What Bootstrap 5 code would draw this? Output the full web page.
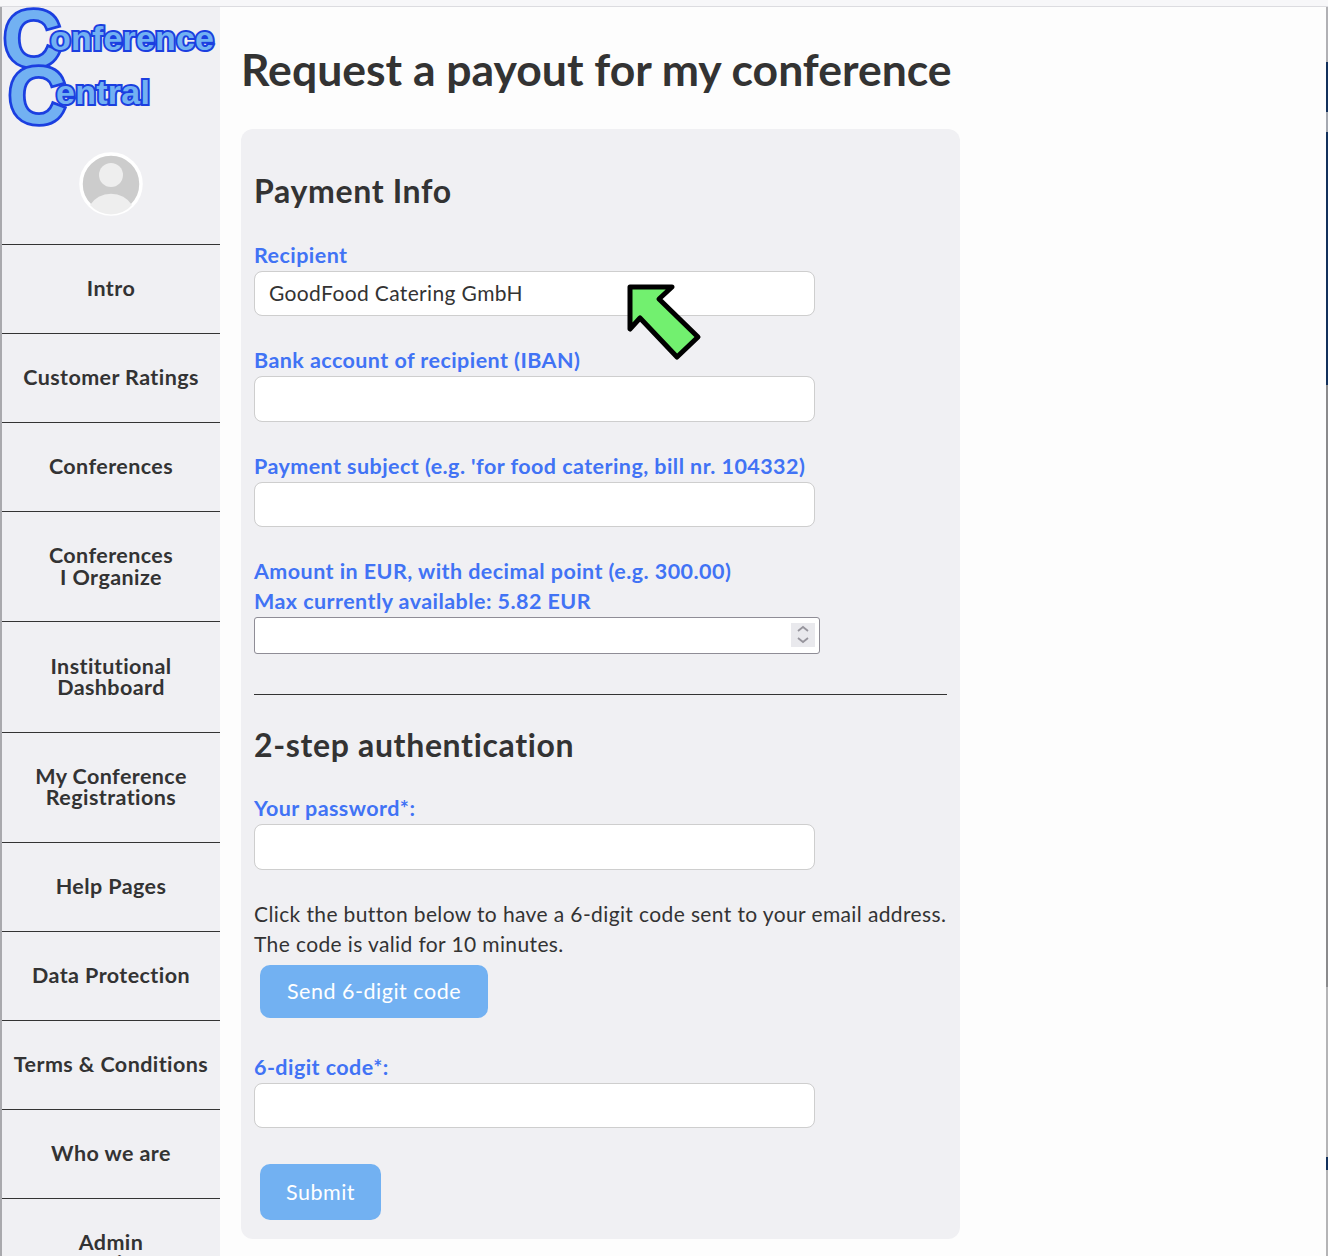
<!DOCTYPE html>
<html lang="en"><head><meta charset="utf-8"><title>Request a payout</title>
<link href="https://cdn.jsdelivr.net/npm/bootstrap@5.3.0/dist/css/bootstrap.min.css" rel="stylesheet">
<style>
html,body{height:1256px;overflow:hidden;background:#fdfdfd}
body{font-family:"Lato","Noto Sans",sans-serif;color:#333;font-size:21px}
.topstrip{height:7px;background:#f7f7f9;border-bottom:1px solid #dcdce0}
.pageframe{height:1249px;border-left:2px solid #a9a9ad;overflow:hidden}
.sidebar{width:218px;flex:none;background:#f0f0f3;height:1249px;overflow:hidden}
.logoarea{height:237px;position:relative}
.logosvg{display:block}
.logosvg text{paint-order:stroke}
.sideitem{display:block;border-top:1px solid #333;padding:33.375px 4px;line-height:21.25px;text-align:center;font-weight:700;font-size:21.5px;letter-spacing:.42px;color:#333;text-decoration:none;white-space:nowrap}
.mainpane{padding:0 0 0 21px;flex:1;min-width:0;position:relative}
.pagetitle{font-size:44.5px;font-weight:700;line-height:54px;margin:35px 0 33px 0;white-space:nowrap;color:#333}
.formpanel{width:719px;height:1110px;background:#f0f0f3;border-radius:12px;padding:0 13px}
.sectitle{font-size:32px;font-weight:700;line-height:40px;margin:0;padding-top:42px;height:111.75px;letter-spacing:.66px;color:#333}
.sectitle2{padding-top:0;height:auto;margin-top:30px;margin-bottom:29px}
.fieldlabel{display:block;color:#4173f5;font-weight:700;line-height:30px;margin:-1px 0 0;padding-bottom:1px;font-size:21.5px;letter-spacing:.44px;white-space:nowrap}
.fieldinput{width:561px;height:45.5px;border:1px solid #cecece;border-radius:8px;font-size:21px;letter-spacing:.36px;padding:0 14px 2px;margin-bottom:30px;color:#333}
.fieldinput:focus{border-color:#cecece;box-shadow:none}
.numinput{width:566px;height:36.5px;border:1px solid #8f8d96;border-radius:3px;margin-bottom:0;padding:0 6px}
.numinput::-webkit-inner-spin-button{display:none}
.numwrap{position:relative;width:566px}
.spinbox{position:absolute;right:5px;top:6px;width:24px;height:24px;background:#e9e9ed;display:block}
.divider{border:0;border-top:1px solid #333;opacity:1;margin:40.25px 0 0;width:693px}
.helptext{line-height:30px;margin:-1px 0 6px;white-space:nowrap;font-size:21px;letter-spacing:.38px}
.cfbtn{background:#72b1f2;border:0;border-radius:10px;color:#fff;font-size:21.5px;letter-spacing:.52px;margin-left:6px;padding:0 10px;display:block}
.cfbtn:hover{background:#72b1f2;color:#fff}
.sendbtn{height:53px;width:228px;margin-bottom:35px}
.submitbtn{height:56px;width:121px;margin-top:36px}
.nomargin{margin-bottom:0}
.arrowmark{position:absolute;left:407px;top:272px;display:block}
.scrollstrip{width:2px;flex:none;height:1249px;margin-left:auto;background:linear-gradient(#b0b0b4 0 55px,#12305c 55px 105px,#a4a8b0 105px 125px,#12305c 125px 378px,#8a8a8c 378px 980px,#b4b4b6 980px 1150px,#12305c 1150px 1163px,#b4b4b6 1163px)}
</style></head>
<body>
<div class="topstrip"></div>
<div class="d-flex pageframe">
<aside class="sidebar">
<div class="logoarea">
<svg class="logosvg" width="218" height="237" viewBox="0 0 218 237" font-family="Liberation Sans" font-weight="700" fill="#72b1f2" stroke="#1b3fe0" aria-label="Conference Central">
<text x="1" y="59" font-size="80" stroke-width="5.500">C</text>
<text x="6" y="116" font-size="80" stroke-width="5.500">C</text>
<text x="48" y="43" font-size="34" stroke-width="4" textLength="164">onference</text>
<text x="54" y="97" font-size="34" stroke-width="4" textLength="94">entral</text>
<circle cx="109" cy="177" r="30" fill="#ccc" stroke="#fff" stroke-width="3.500"/>
<circle cx="109" cy="168" r="12" fill="#eee" stroke="none"/>
<path d="M88 198a24 22 0 0 1 42 0a28 28 0 0 1-42 0z" fill="#eee" stroke="none"/>
</svg>
</div>
<a class="sideitem" href="#">Intro</a>
<a class="sideitem" href="#">Customer Ratings</a>
<a class="sideitem" href="#">Conferences</a>
<a class="sideitem" href="#">Conferences<br>I Organize</a>
<a class="sideitem" href="#">Institutional<br>Dashboard</a>
<a class="sideitem" href="#">My Conference<br>Registrations</a>
<a class="sideitem" href="#">Help Pages</a>
<a class="sideitem" href="#">Data Protection</a>
<a class="sideitem" href="#">Terms &amp; Conditions</a>
<a class="sideitem" href="#">Who we are</a>
<a class="sideitem" href="#">Admin<br>functions</a>
</aside>
<main class="mainpane">
<h1 class="pagetitle">Request a payout for my conference</h1>
<form class="formpanel">
<h2 class="sectitle">Payment Info</h2>
<label class="fieldlabel">Recipient</label>
<input class="form-control fieldinput" value="GoodFood Catering GmbH">
<label class="fieldlabel">Bank account of recipient (IBAN)</label>
<input class="form-control fieldinput">
<label class="fieldlabel">Payment subject (e.g. 'for food catering, bill nr. 104332)</label>
<input class="form-control fieldinput">
<label class="fieldlabel">Amount in EUR, with decimal point (e.g. 300.00)<br>Max currently available: 5.82 EUR</label>
<div class="numwrap">
<input class="form-control fieldinput numinput" type="number">
<svg class="spinbox" viewBox="0 0 24 24" fill="none" stroke="#97959d" stroke-width="1.8"><path d="M7 8l5-4 5 4M7 15l5 4 5-4"/></svg>
</div>
<hr class="divider">
<h2 class="sectitle sectitle2">2-step authentication</h2>
<label class="fieldlabel">Your password*:</label>
<input class="form-control fieldinput" type="password">
<p class="helptext">Click the button below to have a 6-digit code sent to your email address.<br>The code is valid for 10 minutes.</p>
<button type="button" class="btn cfbtn sendbtn">Send 6-digit code</button>
<label class="fieldlabel">6-digit code*:</label>
<input class="form-control fieldinput nomargin">
<button type="button" class="btn cfbtn submitbtn">Submit</button>
</form>
<svg class="arrowmark" width="84" height="84" viewBox="0 0 84 84"><path d="M3 8H45L32 20L71 58L50 78L13 39L3 50Z" fill="#72f06f" stroke="#000" stroke-width="5" stroke-linejoin="round"/></svg>
</main>
<div class="scrollstrip"></div>
</div>
<script src="https://cdn.jsdelivr.net/npm/bootstrap@5.3.0/dist/js/bootstrap.bundle.min.js"></script>
</body></html>
